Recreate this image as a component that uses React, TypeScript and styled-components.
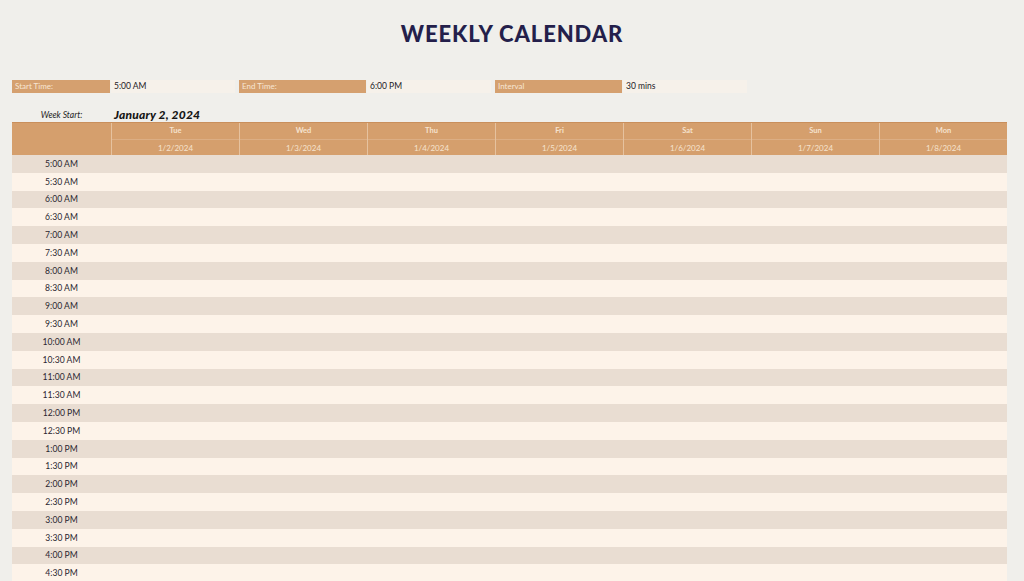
import React from "react";
import styled, { createGlobalStyle } from "styled-components";

const Global = createGlobalStyle`
  html, body { margin: 0; padding: 0; overflow: hidden; background: #f0efeb; }
  body { font-family: "Lato", "Noto Sans", sans-serif; }
`;

const Page = styled.div`
  width: 1024px;
  height: 581px;
  overflow: hidden;
  background: #f0efeb;
  padding: 0 0 0 12px;
  box-sizing: border-box;
`;

const Title = styled.h1`
  margin: 0;
  width: 1000px;
  padding-top: 21px;
  height: 58px;
  box-sizing: border-box;
  text-align: center;
  font-family: "Lato", sans-serif;
  font-weight: 900;
  font-size: 22px;
  letter-spacing: 0.9px;
  color: #241f4b;
  line-height: 26px;
`;

const Grid = styled.div`
  display: grid;
  grid-template-columns: 99px repeat(7, 128px);
  width: 995px;
`;

const Settings = styled(Grid)`
  margin-top: 22px;
  height: 13px;
`;

const Label = styled.div`
  background: #d5a06f;
  color: #f7e6d4;
  font-size: 8px;
  line-height: 13px;
  padding-left: 3px;
  margin-right: 1px;
`;

const Value = styled.div`
  background: #f6f1ea;
  color: #1c1a1f;
  font-size: 8.5px;
  line-height: 13px;
  padding-left: 3px;
  margin-right: 4px;
`;

const WeekRow = styled(Grid)`
  margin-top: 13px;
  height: 16px;
  align-items: center;
`;

const WeekLabel = styled.div`
  font-style: italic;
  font-size: 8.6px;
  color: #222;
  text-align: center;
  padding-top: 2px;
`;

const WeekValue = styled.div`
  grid-column: span 2;
  font-style: italic;
  font-weight: 900;
  font-size: 12px;
  letter-spacing: 0.2px;
  color: #151515;
  padding-left: 3px;
`;

const Header = styled(Grid)`
  background: #d59f6d;
  border-top: 1px solid #c98f5c;
  height: 33px;
  box-sizing: border-box;
`;

const HeadCell = styled.div<{ $first?: boolean }>`
  display: grid;
  grid-template-rows: 16px 16px;
  border-left: ${(p) => (p.$first ? "none" : "1px solid #e6c29f")};
  color: #f6e3cf;
  font-size: 7.5px;
  font-weight: 700;
  text-align: center;
`;

const HeadName = styled.div`
  line-height: 16px;
`;

const HeadDate = styled.div`
  line-height: 16px;
  font-weight: 400;
  font-size: 8px;
  border-top: 1px solid #dcae84;
`;

const Row = styled(Grid)<{ $dark: boolean }>`
  height: 17.8px;
  background: ${(p) => (p.$dark ? "#e9ddd2" : "#fdf3e9")};
  align-items: center;
`;

const TimeCell = styled.div`
  text-align: center;
  font-size: 8.6px;
  color: #2a2630;
`;

const days = [
  ["Tue", "1/2/2024"],
  ["Wed", "1/3/2024"],
  ["Thu", "1/4/2024"],
  ["Fri", "1/5/2024"],
  ["Sat", "1/6/2024"],
  ["Sun", "1/7/2024"],
  ["Mon", "1/8/2024"],
];

const times: string[] = [];
for (let m = 5 * 60; m <= 16 * 60 + 30; m += 30) {
  const h24 = Math.floor(m / 60);
  const mm = m % 60;
  const h = h24 % 12 === 0 ? 12 : h24 % 12;
  times.push(`${h}:${mm === 0 ? "00" : "30"} ${h24 < 12 ? "AM" : "PM"}`);
}

export default function App() {
  return (
    <Page>
      <Global />
      <Title>WEEKLY CALENDAR</Title>
      <Settings>
        <Label>Start Time:</Label>
        <Value>5:00 AM</Value>
        <Label>End Time:</Label>
        <Value>6:00 PM</Value>
        <Label>Interval</Label>
        <Value>30 mins</Value>
      </Settings>
      <WeekRow>
        <WeekLabel>Week Start:</WeekLabel>
        <WeekValue>January 2, 2024</WeekValue>
      </WeekRow>
      <Header>
        <HeadCell $first />
        {days.map(([n, d]) => (
          <HeadCell key={n}>
            <HeadName>{n}</HeadName>
            <HeadDate>{d}</HeadDate>
          </HeadCell>
        ))}
      </Header>
      {times.map((t, i) => (
        <Row key={t} $dark={i % 2 === 0}>
          <TimeCell>{t}</TimeCell>
        </Row>
      ))}
    </Page>
  );
}
